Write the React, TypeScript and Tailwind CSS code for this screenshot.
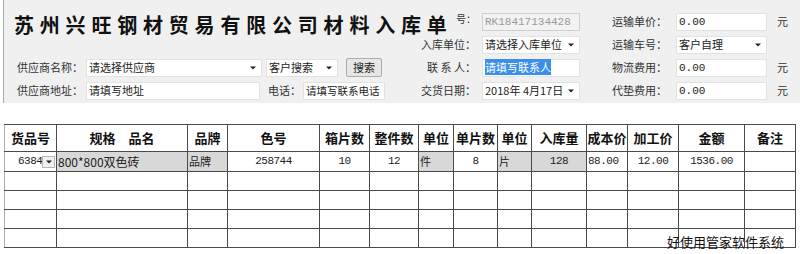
import type { ReactNode } from 'react';

const CJK = "font-['Noto_Sans_CJK_SC',sans-serif]";
const MONO = "font-['Liberation_Mono','Noto_Sans_CJK_SC',monospace]";

const COLS = [52, 131, 40, 92, 50, 49, 35, 44, 34, 55, 41, 51, 66, 51];
const HEADERS = ['货品号', '规格　品名', '品牌', '色号', '箱片数', '整件数', '单位', '单片数', '单位', '入库量', '成本价', '加工价', '金额', '备注'];

function Caret() {
  return (
    <svg width="6" height="4" viewBox="0 0 6 4" className="shrink-0">
      <path d="M0 0.5h6L3 3.5z" fill="#222" />
    </svg>
  );
}

function Box({ w, children, select, disabled }: { w: string; children?: ReactNode; select?: boolean; disabled?: boolean }) {
  return (
    <div
      className={`${w} flex h-[18px] items-center justify-between border pl-[2px] text-[11px] ${select ? 'pr-[5px]' : 'pr-0'} ${
        disabled ? 'border-[#cfcfcf] bg-[#f2f2f2] text-[#9a9a9a]' : 'border-[#e2e2e2] bg-white text-[#222]'
      }`}
    >
      <span className="overflow-hidden whitespace-nowrap">{children}</span>
      {select && <Caret />}
    </div>
  );
}

function Row({ children, className = '' }: { children: ReactNode; className?: string }) {
  return <div className={`flex h-[23px] items-center ${className}`}>{children}</div>;
}

type Cell = { text?: string; gray?: boolean; left?: boolean };

const DATA: Cell[] = [
  { text: '63845' },
  { text: '800*800双色砖', gray: true, left: true },
  { text: '品牌', gray: true, left: true },
  { text: '258744' },
  { text: '10' },
  { text: '12' },
  { text: '件', gray: true, left: true },
  { text: '8' },
  { text: '片', gray: true, left: true },
  { text: '128', gray: true },
  { text: '88.00', left: true },
  { text: '12.00' },
  { text: '1536.00' },
  {},
];

export default function App() {
  return (
    <div className={`relative h-[254px] w-[800px] overflow-hidden bg-white text-[#222] ${CJK}`}>
      <div className="ml-[3px] flex h-[103px] border-l border-[#a8a8a8] bg-[#f0f0f0] pt-[10px]">
        {/* left block */}
        <div className="w-[416px]">
          <div className="h-[46px] pl-[10px] pt-[5px] text-[20px] font-bold leading-[20px] tracking-[5.8px] text-[#111] whitespace-nowrap">
            苏州兴旺钢材贸易有限公司材料入库单
          </div>
          <Row className="pl-[13px]">
            <span className="w-[69px] text-[11px] text-[#333]">供应商名称：</span>
            <Box w="w-[176px]" select>请选择供应商</Box>
            <div className="ml-[4px]">
              <Box w="w-[72px]" select>客户搜索</Box>
            </div>
            <button className="ml-[8px] flex h-[19px] w-[36px] items-center justify-center rounded-[2px] border border-[#adadad] bg-[#e6e6e6] text-[11px] text-[#222]">
              搜索
            </button>
          </Row>
          <Row className="pl-[13px]">
            <span className="w-[69px] text-[11px] text-[#333]">供应商地址：</span>
            <Box w="w-[174px]">请填写地址</Box>
            <span className="ml-[8px] w-[35px] text-[11px] text-[#333]">电话：</span>
            <Box w="w-[82px]">
              <span className="text-[10.5px]">请填写联系电话</span>
            </Box>
          </Row>
        </div>

        {/* middle block */}
        <div className="w-[180px]">
          <Row>
            <span className="w-[62px] self-start pt-[1px] pr-[6px] text-right text-[10px] text-[#333]">号：</span>
            <Box w="w-[98px]" disabled>
              <span className={MONO}>RK18417134428</span>
            </Box>
          </Row>
          <Row>
            <span className="w-[62px] pr-[6px] text-right text-[11px] text-[#333]">入库单位：</span>
            <Box w="w-[98px]" select>请选择入库单位</Box>
          </Row>
          <Row>
            <span className="w-[62px] pr-[6px] text-right text-[11px] text-[#333]">联 系 人：</span>
            <Box w="w-[98px]">
              <span className="bg-[#3b8fe8] text-white">请填写联系人</span>
            </Box>
          </Row>
          <Row>
            <span className="w-[62px] pr-[6px] text-right text-[11px] text-[#333]">交货日期：</span>
            <Box w="w-[98px]" select>
              2018年 4月17日
            </Box>
          </Row>
        </div>

        {/* right block */}
        <div className="flex-1 pl-[12px]">
          {[
            { label: '运输单价：', value: '0.00', unit: true },
            { label: '运输车号：', value: '客户自理', select: true },
            { label: '物流费用：', value: '0.00', unit: true },
            { label: '代垫费用：', value: '0.00', unit: true },
          ].map(r => (
            <Row key={r.label}>
              <span className="w-[64px] text-[11px] text-[#333]">{r.label}</span>
              <Box w="w-[91px]" select={r.select}>
                {r.select ? r.value : <span className={MONO}>{r.value}</span>}
              </Box>
              {r.unit && <span className="ml-[10px] text-[11px] text-[#333]">元</span>}
            </Row>
          ))}
        </div>
      </div>

      <div className="pl-[4px] pt-[21px]">
        <table className="w-[791px] table-fixed border-collapse">
          <colgroup>
            {COLS.map((w, i) => (
              <col key={i} style={{ width: w }} />
            ))}
          </colgroup>
          <tbody>
            <tr className="h-[27px]">
              {HEADERS.map((h, i) => (
                <td
                  key={i}
                  className={`border border-[#4a4a4a] p-0 text-center text-[13px] font-bold whitespace-pre text-[#111] ${i === 0 ? 'border-l-[#b0b0b0]' : ''}`}
                >
                  {h}
                </td>
              ))}
            </tr>
            <tr className="h-[20px]">
              {DATA.map((c, i) => (
                <td
                  key={i}
                  className={`relative border border-[#4a4a4a] p-0 text-[11px] whitespace-nowrap overflow-hidden ${
                    c.gray ? 'bg-[#d8d8d8]' : 'bg-white'
                  } ${c.left ? 'text-left pl-[1px]' : 'text-center'} ${i === 0 ? 'border-l-[#b0b0b0] text-left pl-[13px]' : ''} ${
                    /[0-9]/.test(c.text ?? '') && i !== 1 ? `${MONO} tracking-[-0.5px]` : ''
                  } ${i === 1 ? 'text-[12px]' : ''}`}
                >
                  {c.text}
                  {i === 0 && (
                    <span className="absolute right-[1px] top-[4px] flex h-[12px] w-[13px] items-center justify-center border border-[#b8b8b8] bg-[#f0f0f0]">
                      <Caret />
                    </span>
                  )}
                </td>
              ))}
            </tr>
            {[0, 1, 2, 3].map(r => (
              <tr key={r} className="h-[19px]">
                {COLS.map((_, i) => (
                  <td key={i} className={`border border-[#4a4a4a] p-0 ${i === 0 ? 'border-l-[#b0b0b0]' : ''}`} />
                ))}
              </tr>
            ))}
          </tbody>
        </table>
      </div>

      <div className="absolute left-[667px] top-[235px] text-[13px] leading-[14px] text-[#111]">好使用管家软件系统</div>
    </div>
  );
}
